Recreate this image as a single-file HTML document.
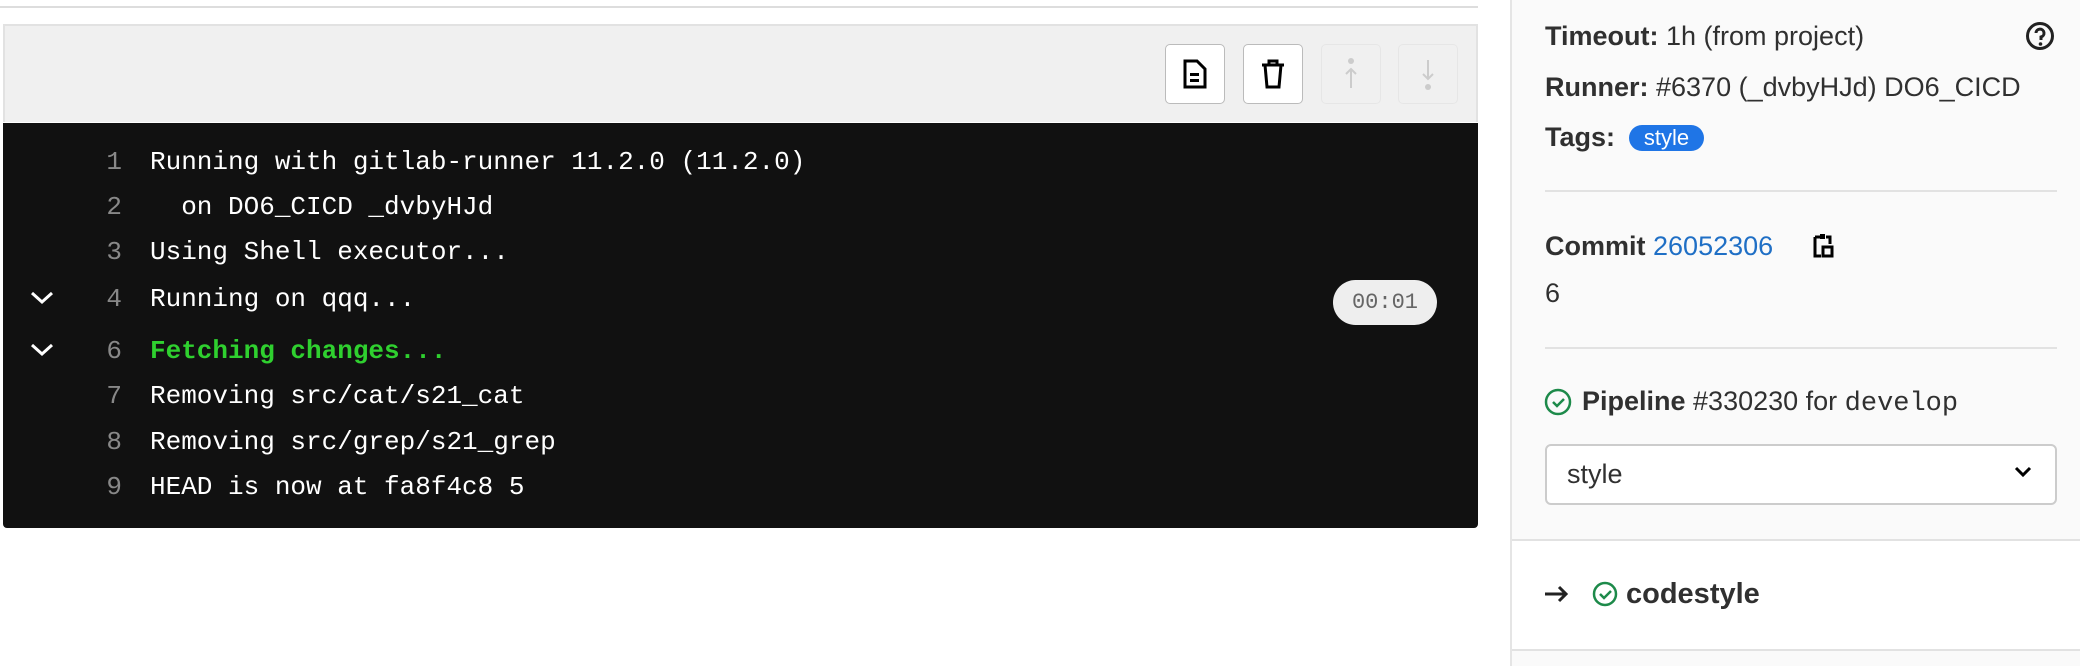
<!DOCTYPE html>
<html><head><meta charset="utf-8"><style>
body{margin:0;width:2080px;height:666px;background:#fff;position:relative;overflow:hidden;font-family:"Liberation Sans",sans-serif;color:#303030}
.a{position:absolute}
.mono{font-family:"Liberation Mono",monospace}
.btn{position:absolute;top:44px;width:60px;height:60px;border:1px solid #bbb;border-radius:5px;background:#fff;box-sizing:border-box;display:flex;align-items:center;justify-content:center}
.btn.dis{background:#f0f0f0;border-color:#e6e6e6}
.ln{position:absolute;left:100px;width:22px;text-align:right;color:#888;font-size:26px}
.tx{position:absolute;left:150px;color:#fff;font-size:26px;white-space:pre}
.sb{position:absolute;left:1545px;font-size:27px;white-space:nowrap}
b{font-weight:bold}
</style></head><body>
<div class="a" style="left:0;top:6px;width:1478px;height:2px;background:#ddd"></div>
<div class="a" style="left:3px;top:24px;width:1475px;height:98px;background:#f0f0f0;border:2px solid #e2e2e2;border-bottom:none;box-sizing:border-box"></div>
<div class="btn" style="left:1165px"><svg width="26" height="30" viewBox="0 0 26 30"><path d="M3 2h12l8 8v18H3z" fill="none" stroke="#000" stroke-width="3"/><rect x="8" y="14" width="9" height="3" fill="#000"/><rect x="8" y="20" width="9" height="3" fill="#000"/></svg></div>
<div class="btn" style="left:1243px"><svg width="26" height="32" viewBox="0 0 26 32"><path d="M2 7h22M9 7V3h8v4M5 7l2 22h12l2-22" fill="none" stroke="#000" stroke-width="3"/></svg></div>
<div class="btn dis" style="left:1321px"><svg width="14" height="32" viewBox="0 0 14 32"><circle cx="7" cy="3" r="3" fill="#ccc"/><path d="M7 30V11M2 16l5-5 5 5" fill="none" stroke="#ccc" stroke-width="2"/></svg></div>
<div class="btn dis" style="left:1398px"><svg width="14" height="32" viewBox="0 0 14 32"><circle cx="7" cy="29" r="3" fill="#ccc"/><path d="M7 2v19M2 16l5 5 5-5" fill="none" stroke="#ccc" stroke-width="2"/></svg></div>
<div class="a mono" style="left:3px;top:123px;width:1475px;height:405px;background:#111;border-radius:0 0 4px 4px"></div>
<div class="mono">
<div class="ln" style="top:147px">1</div><div class="tx" style="top:147px">Running with gitlab-runner 11.2.0 (11.2.0)</div>
<div class="ln" style="top:192px">2</div><div class="tx" style="top:192px">  on DO6_CICD _dvbyHJd</div>
<div class="ln" style="top:237px">3</div><div class="tx" style="top:237px">Using Shell executor...</div>
<div class="ln" style="top:284px">4</div><div class="tx" style="top:284px">Running on qqq...</div>
<div class="ln" style="top:336px">6</div><div class="tx" style="top:336px;color:#2fd02f;font-weight:bold">Fetching changes...</div>
<div class="ln" style="top:381px">7</div><div class="tx" style="top:381px">Removing src/cat/s21_cat</div>
<div class="ln" style="top:427px">8</div><div class="tx" style="top:427px">Removing src/grep/s21_grep</div>
<div class="ln" style="top:472px">9</div><div class="tx" style="top:472px">HEAD is now at fa8f4c8 5</div>
</div>
<svg class="a" style="left:30px;top:290px" width="24" height="16"><path d="M2 3l10 9 10-9" fill="none" stroke="#fff" stroke-width="3"/></svg>
<svg class="a" style="left:30px;top:342px" width="24" height="16"><path d="M2 3l10 9 10-9" fill="none" stroke="#fff" stroke-width="3"/></svg>
<div class="a mono" style="left:1333px;top:280px;width:104px;height:45px;border-radius:23px;background:#eee;color:#666;font-size:22px;line-height:45px;text-align:center">00:01</div>

<div class="a" style="left:1510px;top:0;width:570px;height:666px;background:#fafafa;border-left:2px solid #e5e5e5"></div>
<div class="a" style="left:1545px;top:190px;width:512px;height:2px;background:#e2e2e2"></div>
<div class="a" style="left:1545px;top:347px;width:512px;height:2px;background:#e2e2e2"></div>
<div class="a" style="left:1512px;top:539px;width:568px;height:108px;background:#fff;border-top:2px solid #e2e2e2;border-bottom:2px solid #e2e2e2"></div>
<div class="sb" style="top:21px"><b>Timeout:</b> 1h (from project)</div>
<svg class="a" style="left:2024px;top:20px" width="32" height="32"><circle cx="16" cy="16" r="12.5" fill="none" stroke="#222" stroke-width="3"/><path d="M12 13a4 4 0 1 1 5 4v3" fill="none" stroke="#222" stroke-width="3"/><circle cx="16.5" cy="24" r="1.8" fill="#222"/></svg>
<div class="sb" style="top:72px"><b>Runner:</b> #6370 (_dvbyHJd) DO6_CICD</div>
<div class="sb" style="top:122px"><b>Tags:</b></div>
<div class="a" style="left:1629px;top:125px;width:75px;height:26px;border-radius:13px;background:#1f75e6;color:#fff;font-size:22px;line-height:26px;text-align:center">style</div>
<div class="sb" style="top:231px"><b>Commit</b> <span style="color:#1f6fc5">26052306</span></div>
<svg class="a" style="left:1812px;top:232px" width="24" height="28"><path d="M3 5h5M14 5h4V12M3 5v19h6" fill="none" stroke="#000" stroke-width="3"/><rect x="8" y="2" width="5" height="5" fill="#000"/><rect x="11" y="15" width="9" height="9" fill="none" stroke="#000" stroke-width="3"/></svg>
<div class="sb" style="top:278px">6</div>
<svg class="a" style="left:1544px;top:388px" width="28" height="28"><circle cx="14" cy="14" r="12" fill="none" stroke="#1d8a4a" stroke-width="2.5"/><path d="M9 14l4 4 7-7" fill="none" stroke="#1d8a4a" stroke-width="2.5"/></svg>
<div class="sb" style="left:1582px;top:386px"><b>Pipeline</b> #330230 for <span class="mono">develop</span></div>
<div class="a" style="left:1545px;top:444px;width:512px;height:61px;border:2px solid #ccc;border-radius:6px;background:#fff;box-sizing:border-box"></div>
<div class="sb" style="left:1567px;top:459px">style</div>
<svg class="a" style="left:2014px;top:465px" width="18" height="14"><path d="M2 3l7 7 7-7" fill="none" stroke="#000" stroke-width="3"/></svg>
<svg class="a" style="left:1544px;top:585px" width="26" height="18"><path d="M1 9h21M15 2l7 7-7 7" fill="none" stroke="#222" stroke-width="3"/></svg>
<svg class="a" style="left:1591px;top:580px" width="28" height="28"><circle cx="14" cy="14" r="11" fill="none" stroke="#1d8a4a" stroke-width="2.5"/><path d="M9 14l4 4 7-7" fill="none" stroke="#1d8a4a" stroke-width="2.5"/></svg>
<div class="sb" style="left:1626px;top:578px;font-size:29px"><b>codestyle</b></div>
</body></html>
